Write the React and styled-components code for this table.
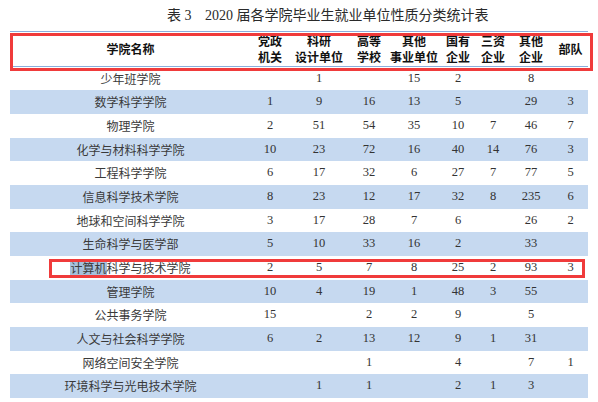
import React from "react";
import styled, { createGlobalStyle } from "styled-components";

const columns = [
  { key: "name", label: ["学院名称"] },
  { key: "gov", label: ["党政", "机关"] },
  { key: "research", label: ["科研", "设计单位"] },
  { key: "college", label: ["高等", "学校"] },
  { key: "inst", label: ["其他", "事业单位"] },
  { key: "state", label: ["国有", "企业"] },
  { key: "foreign", label: ["三资", "企业"] },
  { key: "other", label: ["其他", "企业"] },
  { key: "army", label: ["部队"] },
];

const rows = [
  ["少年班学院", "", "1", "", "15", "2", "", "8", ""],
  ["数学科学学院", "1", "9", "16", "13", "5", "", "29", "3"],
  ["物理学院", "2", "51", "54", "35", "10", "7", "46", "7"],
  ["化学与材料科学学院", "10", "23", "72", "16", "40", "14", "76", "3"],
  ["工程科学学院", "6", "17", "32", "6", "27", "7", "77", "5"],
  ["信息科学技术学院", "8", "23", "12", "17", "32", "8", "235", "6"],
  ["地球和空间科学学院", "3", "17", "28", "7", "6", "", "26", "2"],
  ["生命科学与医学部", "5", "10", "33", "16", "2", "", "33", ""],
  ["计算机科学与技术学院", "2", "5", "7", "8", "25", "2", "93", "3"],
  ["管理学院", "10", "4", "19", "1", "48", "3", "55", ""],
  ["公共事务学院", "15", "", "2", "2", "9", "", "5", ""],
  ["人文与社会科学学院", "6", "2", "13", "12", "9", "1", "31", ""],
  ["网络空间安全学院", "", "", "1", "", "4", "", "7", "1"],
  ["环境科学与光电技术学院", "", "1", "1", "", "2", "1", "3", ""],
];

const GlobalStyle = createGlobalStyle`
  html, body {
    margin: 0;
    padding: 0;
    background: #fff;
  }
  body {
    font-family: "Liberation Serif", "Noto Sans CJK SC", serif;
    color: #333;
  }
`;

const Page = styled.div`
  width: 598px;
  height: 402px;
  overflow: hidden;
`;

const Title = styled.div`
  height: 31px;
  padding-left: 167px;
  font-size: 14px;
  line-height: 31px;
  color: #2a2a2a;
`;

const TitleGap = styled.span`
  display: inline-block;
  width: 13.5px;
`;

const Table = styled.div`
  position: relative;
  margin-left: 10px;
  width: 578px;
`;

const Grid = styled.div`
  display: grid;
  grid-template-columns: 241px 38px 60px 40px 50px 38px 32px 44px 35px;
  align-items: center;
`;

const HeadRow = styled(Grid)`
  box-sizing: border-box;
  height: 35.5px;
  border-top: 1.5px solid #8aaedc;
  border-bottom: 1.5px solid #8aaedc;
  font-family: "Noto Sans CJK SC", sans-serif;
  font-weight: 700;
  font-size: 12px;
  line-height: 16px;
  color: #111;
`;

const HeadCell = styled.div`
  text-align: center;
  white-space: nowrap;
`;

const Row = styled(Grid)`
  height: 23.7px;
  background: ${(p) => (p.$band ? "#c6d9f0" : "#fff")};
  font-size: 12px;
  line-height: 23.7px;
`;

const NameCell = styled.div`
  text-align: center;
  font-family: "Noto Sans CJK SC", sans-serif;
  color: #3a3a3a;
`;

const NumCell = styled.div`
  text-align: center;
  font-family: "Liberation Serif", serif;
  font-size: 12.5px;
  color: #333;
`;

const Selected = styled.span`
  background: #a6c1dd;
`;

const Annotation = styled.div`
  position: absolute;
  box-sizing: border-box;
  left: ${(p) => p.$x}px;
  top: ${(p) => p.$y}px;
  width: ${(p) => p.$w}px;
  height: ${(p) => p.$h}px;
  border: 3px solid #f03b3b;
  pointer-events: none;
`;

function renderName(name) {
  if (name.startsWith("计算机")) {
    return (
      <>
        <Selected>计算机</Selected>
        {name.slice(3)}
      </>
    );
  }
  return name;
}

export default function App() {
  return (
    <Page>
      <GlobalStyle />
      <Title>
        表 3<TitleGap />2020 届各学院毕业生就业单位性质分类统计表
      </Title>
      <Table>
        <HeadRow>
          {columns.map((c) => (
            <HeadCell key={c.key}>
              {c.label.map((l) => (
                <div key={l}>{l}</div>
              ))}
            </HeadCell>
          ))}
        </HeadRow>
        {rows.map((r, i) => (
          <Row key={r[0]} $band={i % 2 === 1}>
            <NameCell>{renderName(r[0])}</NameCell>
            {r.slice(1).map((v, j) => (
              <NumCell key={j}>{v}</NumCell>
            ))}
          </Row>
        ))}
        <Annotation $x={0} $y={1.5} $w={583} $h={38} />
        <Annotation $x={39} $y={227.5} $w={536} $h={19.5} />
      </Table>
    </Page>
  );
}
